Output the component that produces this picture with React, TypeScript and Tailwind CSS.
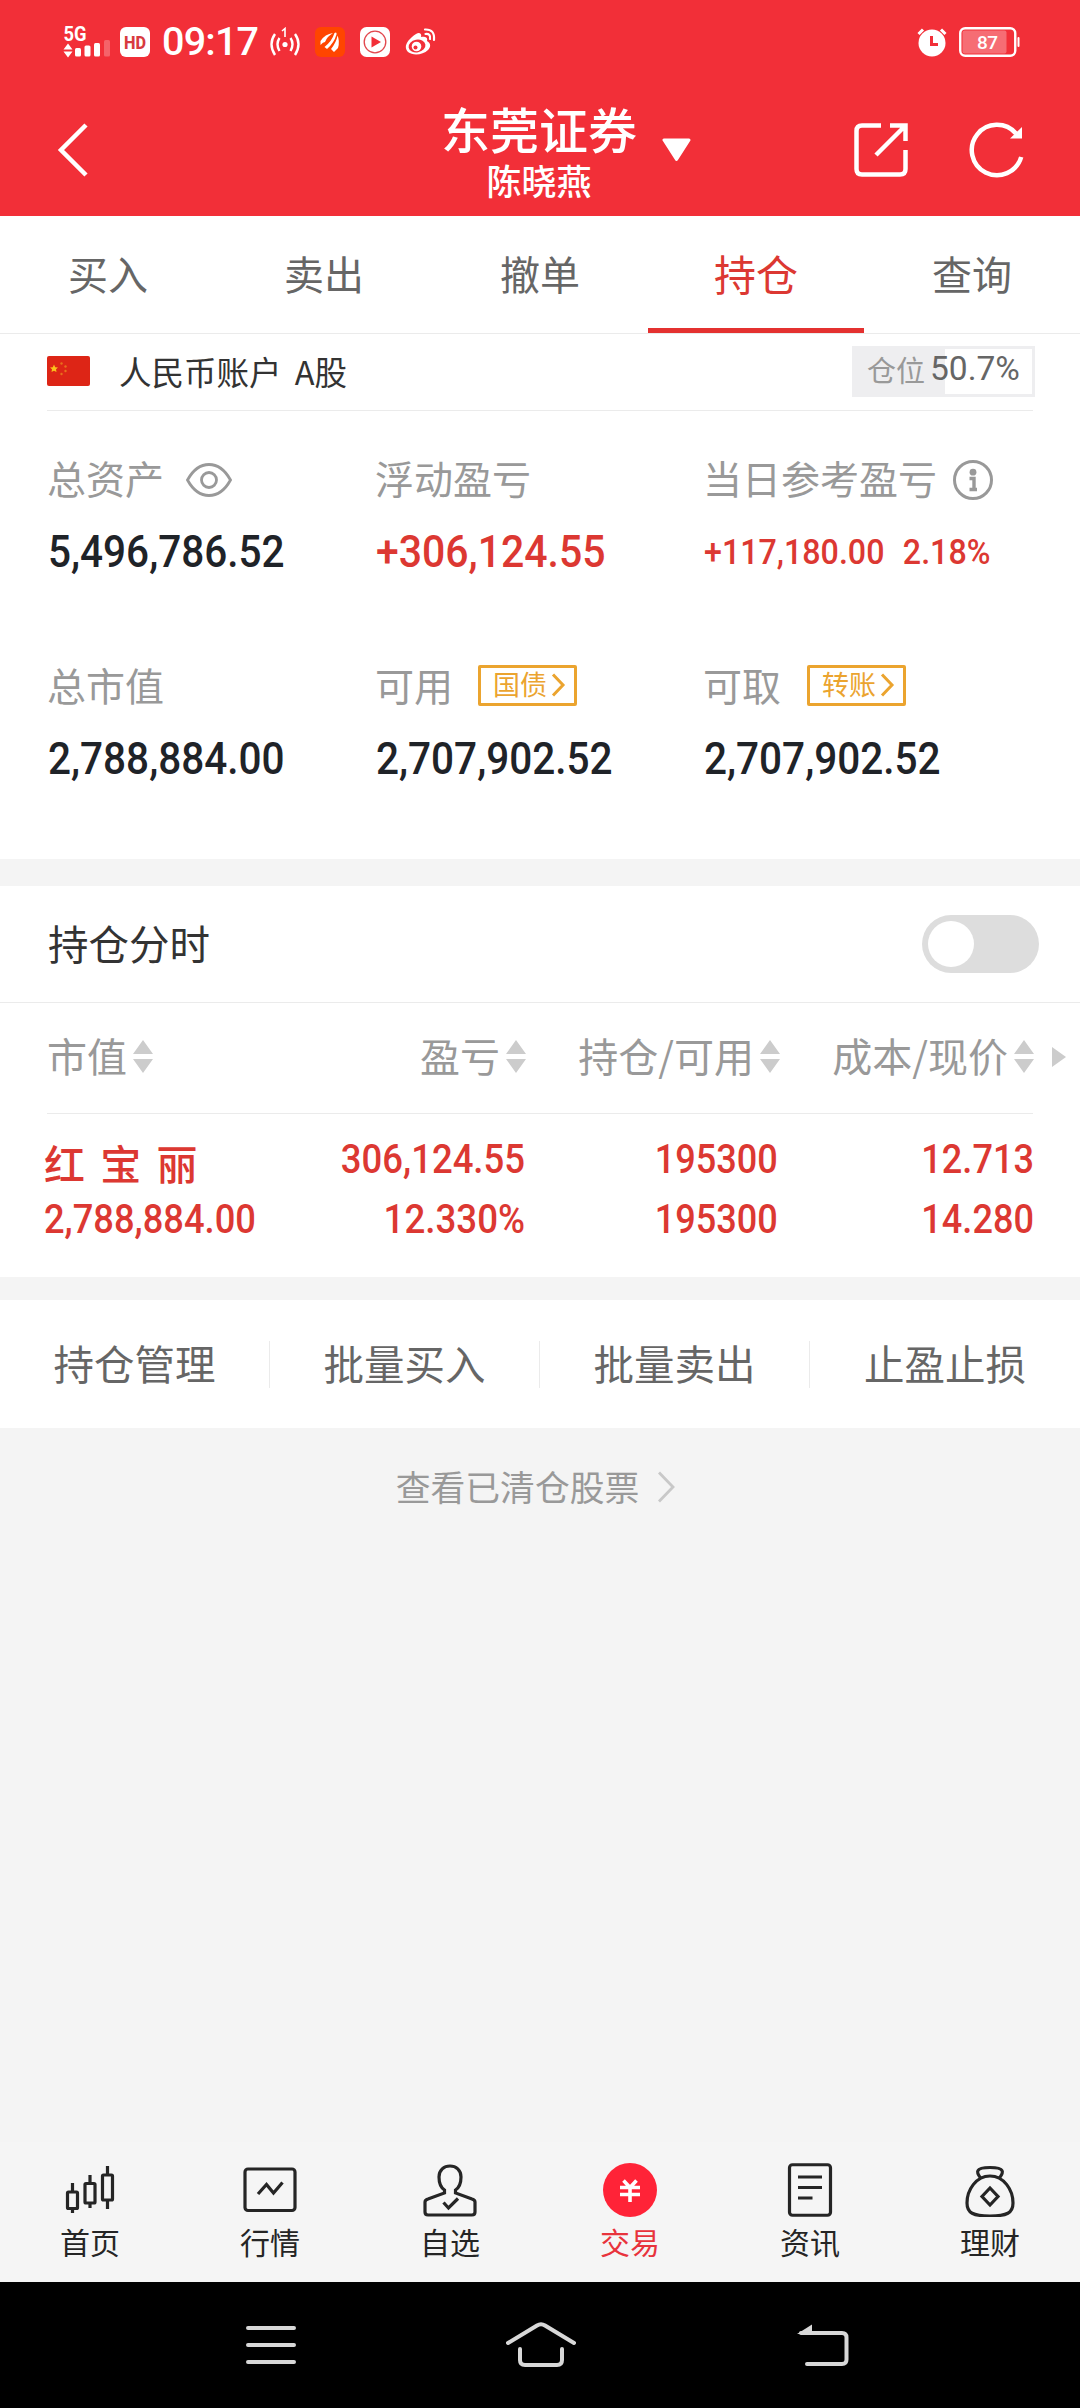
import type { ReactNode } from "react";
import clsx from "clsx";

const tabs = ["买入", "卖出", "撤单", "持仓", "查询"];

const actions = ["持仓管理", "批量买入", "批量卖出", "止盈止损"];

const BackIcon = () => (
  <svg width="32" height="56" viewBox="0 0 32 56" fill="none">
    <path d="M29 3 4 28 29 53" stroke="#fff" strokeWidth="4.5" />
  </svg>
);

const ShareIcon = () => (
  <svg width="54" height="54" viewBox="0 0 54 54" fill="none" stroke="#fff" strokeWidth="4.5">
    <path d="M27 2.5H8Q2.5 2.5 2.5 8V46Q2.5 51.5 8 51.5H46Q51.5 51.5 51.5 46V27" />
    <path d="M36 2.5H51.5V18M51 3 22 32" />
  </svg>
);

const RefreshIcon = () => (
  <svg width="56" height="56" viewBox="0 0 56 56" fill="none">
    <path d="M47 11.500A25.200 25.200 0 1 0 52.200 35" stroke="#fff" strokeWidth="4.5" />
    <path d="M53 5V16.500H41Z" fill="#fff" />
  </svg>
);

const SignalIcon = () => (
  <svg width="50" height="36" viewBox="0 0 50 36" fill="#fff">
    <text x="0.5" y="16.5" fontSize="20" fontWeight="700" fontFamily="Roboto" textLength="23" lengthAdjust="spacingAndGlyphs">
      5G
    </text>
    <path d="M0.5 25.500 5 19.500 9.500 25.500ZM0.5 27.500H9.500L5 33.500Z" />
    <rect x="12" y="24" width="6" height="8.500" rx="1.5" />
    <rect x="21.500" y="21.500" width="6" height="11" rx="1.5" />
    <rect x="31" y="19" width="6" height="13.500" rx="1.5" />
    <rect x="41" y="16" width="6" height="16.500" rx="1.5" opacity="0.25" />
  </svg>
);

const HotspotIcon = () => (
  <svg width="30" height="30" viewBox="0 0 30 30" fill="none" stroke="#fff" strokeWidth="2.4">
    <path d="M5 7Q-2 17 5 28M25 7Q32 17 25 28M9.500 11Q5.500 17 9.500 24M20.500 11Q24.500 17 20.500 24" />
    <path d="M12 4 15 1.500V10" strokeWidth="1.6" />
    <circle cx="15" cy="17.500" r="2.6" fill="#fff" stroke="none" />
  </svg>
);

const FanAppIcon = () => (
  <svg width="30" height="30" viewBox="0 0 30 30">
    <rect width="30" height="30" rx="6" fill="#ff4500" />
    <path d="M5.500 14Q10 7 18 6 12 9.500 10 15 8 15 5.500 18Z" fill="#fff" />
    <path d="M9.500 20Q17 14 19.500 6 22 4.500 21.500 7.500 19 16 12 22Z" fill="#fff" />
    <path d="M16 22Q21.500 15 22.500 8.500 25 14 23 21L19 25Z" fill="#fff" />
  </svg>
);

const VideoAppIcon = () => (
  <svg width="30" height="30" viewBox="0 0 30 30">
    <rect width="30" height="30" rx="6.5" fill="#fff" />
    <circle cx="15" cy="15" r="10.8" fill="none" stroke="#e2474d" strokeWidth="1.3" />
    <path d="M11.500 9.500 21 15 11.500 20.500Z" fill="#f22f38" />
  </svg>
);

const WeiboIcon = () => (
  <svg width="31" height="30" viewBox="0 0 31 30">
    <path
      d="M11 7C14 5 17 6 16 10 20 9 23 10 22 14 26 16 26 20 23 23 18 28 8 29 3 25-2 20 2 13 11 7Z"
      fill="#fff"
    />
    <ellipse cx="12" cy="19" rx="8.5" ry="6.3" fill="#f22f38" transform="rotate(-10 12 19)" />
    <circle cx="11.5" cy="19.5" r="4.8" fill="#fff" />
    <circle cx="10.500" cy="20.500" r="2" fill="#f22f38" />
    <path
      d="M20 2.500Q30 2 29 13M20.500 7Q26 6.500 25 12"
      fill="none"
      stroke="#fff"
      strokeWidth="2.2"
      strokeLinecap="round"
    />
  </svg>
);

const AlarmIcon = () => (
  <svg width="30" height="30" viewBox="0 0 30 30" fill="none">
    <circle cx="15" cy="16" r="13.5" fill="#fff" />
    <path d="M1.500 7 6 2.500M28.500 7 24 2.500" stroke="#fff" strokeWidth="3" />
    <path d="M14.500 9V17.500H21" stroke="#f22f38" strokeWidth="3" />
  </svg>
);

const BatteryIcon = () => (
  <svg width="61" height="30" viewBox="0 0 61 30">
    <rect x="1.25" y="1.25" width="55" height="27.5" rx="5" fill="none" stroke="#fff" strokeWidth="2.4" />
    <rect x="3.5" y="3.5" width="44" height="23" rx="2" fill="#fff" opacity="0.3" />
    <rect x="58.5" y="10" width="2" height="10" rx="1" fill="#fff" />
    <text x="28.5" y="21.5" textAnchor="middle" fontSize="19" fontWeight="500" fontFamily="Roboto" fill="#fff" textLength="21">
      87
    </text>
  </svg>
);

const FlagIcon = () => (
  <svg width="43" height="30" viewBox="0 0 43 30">
    <rect width="43" height="30" rx="2" fill="#dd2516" />
    <path d="M7 8.500 8.200 11.200 11 11.500 9 13.300 9.500 16 7 14.700 4.500 16 5 13.300 3 11.500 5.800 11.200Z" fill="#fbc21c" />
    <g fill="#e8701c">
      <circle cx="14.5" cy="7.5" r="1.2" />
      <circle cx="18.5" cy="10.5" r="1.2" />
      <circle cx="18.5" cy="15" r="1.2" />
      <circle cx="14.5" cy="18" r="1.2" />
    </g>
  </svg>
);

const EyeIcon = () => (
  <svg width="46" height="34" viewBox="0 0 46 34" fill="none" stroke="#999" strokeWidth="2.8">
    <path d="M1.500 17C7 7 14 1.500 23 1.500S39 7 44.500 17C39 27 32 32.500 23 32.500S7 27 1.500 17Z" />
    <circle cx="23" cy="17" r="7.5" />
  </svg>
);

const InfoIcon = () => (
  <svg width="40" height="40" viewBox="0 0 40 40" fill="none">
    <circle cx="20" cy="20" r="18.5" stroke="#999" strokeWidth="3" />
    <circle cx="20" cy="12.2" r="3.4" fill="#999" />
    <path d="M16.500 18.500H21V30M16.500 29.500H24" stroke="#999" strokeWidth="3.4" />
  </svg>
);

const SortIcon = () => (
  <svg width="20" height="34" viewBox="0 0 20 34" fill="#ccc">
    <path d="M0 14 10 0 20 14ZM0 19H20L10 33Z" />
  </svg>
);

interface NumProps {
  className?: string;
  children: ReactNode;
}

function Num({ className, children }: NumProps) {
  return (
    <span className={clsx("inline-block whitespace-nowrap leading-none font-medium font-[Roboto,sans-serif]", className)}>
      {children}
    </span>
  );
}

function LinkBadge({ text }: { text: string }) {
  return (
    <button className="flex items-center justify-center gap-1 w-[99px] h-[41px] -mt-1 pl-1 border-[3px] border-[#eba42f] rounded-xs text-[27px] leading-none text-[#eba42f]">
      <span className="-mt-1">{text}</span>
      <svg width="15" height="24" viewBox="0 0 15 24" fill="none">
        <path d="M2 1.500 12 12 2 22.500" stroke="#eba42f" strokeWidth="3" />
      </svg>
    </button>
  );
}

interface StatProps {
  label: string;
  extra?: ReactNode;
  children: ReactNode;
}

function Stat({ label, extra, children }: StatProps) {
  return (
    <div className="flex flex-col w-[328px]">
      <div className="flex items-center h-[44px] text-[39px] leading-none text-[#999]">
        <span className="-mt-1.5 whitespace-nowrap">{label}</span>
        {extra}
      </div>
      <div className="flex items-center h-[50px] mt-6">{children}</div>
    </div>
  );
}

function SortLabel({ text, className }: { text: string; className: string }) {
  return (
    <div className={clsx("flex items-center gap-1.5", className)}>
      <span className="-mt-1">{text}</span>
      <SortIcon />
    </div>
  );
}

const bottomTabs = [
  {
    name: "首页",
    icon: (
      <>
        <rect x="4.5" y="29" width="10" height="16.5" rx="1" />
        <rect x="22" y="20.5" width="10" height="19.5" rx="1" />
        <rect x="39.5" y="12" width="10" height="25" rx="1" />
        <path d="M9.500 20V29M9.500 45V50M27 12V21M27 40V45M44.500 3V12M44.500 37V46" />
      </>
    ),
  },
  {
    name: "行情",
    icon: (
      <>
        <rect x="2" y="6" width="50" height="41.5" rx="3" />
        <path d="M15 31 23.500 21.500 30.500 30 39.500 19.500" />
      </>
    ),
  },
  {
    name: "自选",
    icon: (
      <>
        <path d="M21.500 30V27C17 24 16 19 16 14 16 7 21 3 27 3S38 7 38 14C38 19 37 24 32.500 27V30L49 36Q52 37 52 39V49Q52 52 49 52H5Q2 52 2 49V39Q2 37 5 36Z" />
        <path d="M20.500 39.500 25.500 45 35 35.500" />
      </>
    ),
  },
  { name: "交易", icon: null },
  {
    name: "资讯",
    icon: (
      <>
        <rect x="6.5" y="1.75" width="41" height="50.5" rx="3" />
        <path d="M15 14H39M15 24.500H39M15 35H29.500" />
      </>
    ),
  },
  {
    name: "理财",
    icon: (
      <>
        <path d="M18 15.500C16 13 13.500 10 15 7.500 17 3.500 37 3.500 39 7.500 40.500 10 38 13 36 15.500" />
        <path d="M27 13C13 13 4 27 4 40 4 50 10 53 27 53S50 50 50 40C50 27 41 13 27 13Z" />
        <path d="M27 25 35 33.500 27 42 19 33.500Z" />
      </>
    ),
  },
];

function StatusBar() {
  return (
    <div className="flex items-center h-[84px] pl-[63px] pr-[60px]">
      <SignalIcon />
      <svg className="ml-[7px]" width="30" height="30" viewBox="0 0 30 30">
        <rect width="30" height="30" rx="6" fill="#fff" />
        <text x="15" y="21.5" textAnchor="middle" fontSize="18" fontWeight="800" fontFamily="Roboto" fill="#d83a40" textLength="22" lengthAdjust="spacingAndGlyphs">
          HD
        </text>
      </svg>
      <span className="w-[95px] ml-3 text-[39.5px] leading-none tracking-[-0.8px] text-white font-medium font-[Roboto,sans-serif]">
        09:17
      </span>
      <div className="flex items-center gap-[15px] ml-[13px]">
        <HotspotIcon />
        <FanAppIcon />
        <VideoAppIcon />
        <WeiboIcon />
      </div>
      <div className="flex items-center gap-3 ml-auto">
        <AlarmIcon />
        <BatteryIcon />
      </div>
    </div>
  );
}

function Header() {
  return (
    <header className="h-[216px] bg-[#f22f38] text-white">
      <StatusBar />
      <div className="flex items-center h-[132px] pl-[57px] pr-[55px]">
        <div className="w-[353px]">
          <BackIcon />
        </div>
        <div className="flex flex-col items-center w-[258px] leading-none whitespace-nowrap">
          <h1 className="text-[49px] font-medium">东莞证券</h1>
          <p className="mt-2.5 text-[35px] font-medium">陈晓燕</p>
        </div>
        <svg className="-ml-1.5" width="29" height="24" viewBox="0 0 29 24">
          <path d="M2 2H27L14.500 21.500Z" fill="#fff" stroke="#fff" strokeWidth="3" strokeLinejoin="round" />
        </svg>
        <div className="flex items-center gap-[61px] ml-auto">
          <ShareIcon />
          <RefreshIcon />
        </div>
      </div>
    </header>
  );
}

export default function App() {
  return (
    <div className="flex flex-col w-[1080px] h-[2408px] overflow-hidden bg-[#f4f4f4] font-[Noto_Sans_CJK_SC,sans-serif]">
      <Header />

      <nav className="flex h-[118px] bg-white border-b border-[#ebebeb]">
        {tabs.map((tab) => (
          <button
            key={tab}
            className={clsx(
              "flex-1 flex items-center justify-center pt-0.5 leading-none border-b-[5px]",
              tab === "持仓"
                ? "text-[42px] text-[#dc3832] border-[#e43130]"
                : "text-[40px] text-[#666] border-transparent"
            )}
          >
            {tab}
          </button>
        ))}
      </nav>

      <section className="h-[525px] px-[47px] bg-white">
        <div className="flex items-center h-[77px] pb-0.5 border-b border-[#ebebeb]">
          <FlagIcon />
          <span className="ml-[29px] text-[32.5px] leading-none text-[#333] [word-spacing:6px]">人民币账户 A股</span>
          <div className="relative flex items-center w-[183px] h-[51px] ml-auto -mr-0.5 pb-1 pl-3 border-[3px] border-[#eeeef0] leading-none whitespace-nowrap">
            <div className="absolute left-0 top-0 h-full w-[50.7%] bg-[#eeeef0]" />
            <span className="relative text-[29px] text-[#999]">仓位</span>
            <span className="relative ml-[5px] text-[33.5px] text-[#666] font-[Roboto,sans-serif]">50.7%</span>
          </div>
        </div>

        <div className="flex pt-[47px]">
          <Stat label="总资产" extra={<span className="ml-[22px]"><EyeIcon /></span>}>
            <Num className="ml-px text-[45px] text-[#1f2328] origin-left scale-x-[0.9]">5,496,786.52</Num>
          </Stat>
          <Stat label="浮动盈亏">
            <Num className="ml-px text-[45px] text-[#dc3832] origin-left scale-x-[0.91]">+306,124.55</Num>
          </Stat>
          <Stat label="当日参考盈亏" extra={<span className="ml-4"><InfoIcon /></span>}>
            <Num className="ml-px mt-0.5 text-[35px] text-[#dc3832] origin-left scale-x-[0.92]">
              +117,180.00<span className="ml-5">2.18%</span>
            </Num>
          </Stat>
        </div>
        <div className="flex pt-[89px]">
          <Stat label="总市值">
            <Num className="ml-px text-[45px] text-[#1f2328] origin-left scale-x-[0.9]">2,788,884.00</Num>
          </Stat>
          <Stat label="可用" extra={<span className="ml-[25px]"><LinkBadge text="国债" /></span>}>
            <Num className="ml-px text-[45px] text-[#1f2328] origin-left scale-x-[0.9]">2,707,902.52</Num>
          </Stat>
          <Stat label="可取" extra={<span className="ml-[26px]"><LinkBadge text="转账" /></span>}>
            <Num className="ml-px text-[45px] text-[#1f2328] origin-left scale-x-[0.9]">2,707,902.52</Num>
          </Stat>
        </div>
      </section>

      <section className="h-[391px] mt-[27px] bg-white">
        <div className="flex items-center justify-between h-[117px] pl-12 pr-[41px] border-b border-[#ebebeb]">
          <span className="-mt-px text-[40.5px] leading-none text-[#333]">持仓分时</span>
          <button className="flex items-center w-[117px] h-[58px] pl-1.5 rounded-full bg-[#ddd]">
            <span className="size-[46px] rounded-full bg-white" />
          </button>
        </div>

        <div className="flex items-center h-[110px] pb-0.5 pl-[47px] text-[40px] leading-none text-[#999] whitespace-nowrap">
          <SortLabel text="市值" className="w-[259px]" />
          <SortLabel text="盈亏" className="w-[220px] justify-end" />
          <SortLabel text="持仓/可用" className="w-[254px] justify-end" />
          <SortLabel text="成本/现价" className="w-[254px] justify-end" />
          <svg className="ml-[18px]" width="14" height="20" viewBox="0 0 14 20">
            <path d="M0 0 14 10 0 20Z" fill="#ccc" />
          </svg>
        </div>

        <div className="mx-[47px] border-t border-[#ebebeb]" />

        <div className="flex pt-[23px] pl-11 text-[#dc3832]">
          <div className="flex flex-col w-[262px]">
            <div className="flex items-center h-[50px] text-[41px] leading-none font-medium whitespace-pre [word-spacing:6px]">红 宝 丽</div>
            <Num className="mt-3 text-[41px] origin-left scale-x-[0.885]">2,788,884.00</Num>
          </div>
          <div className="flex flex-col items-end w-[219px] pt-0.5 gap-[19px]">
            <Num className="text-[41px] origin-right scale-x-[0.89]">306,124.55</Num>
            <Num className="text-[41px] origin-right scale-x-[0.895]">12.330%</Num>
          </div>
          <div className="flex flex-col items-end w-[253px] pt-0.5 gap-[19px]">
            <Num className="text-[41px] origin-right scale-x-[0.88]">195300</Num>
            <Num className="text-[41px] origin-right scale-x-[0.88]">195300</Num>
          </div>
          <div className="flex flex-col items-end w-[256px] pt-0.5 gap-[19px]">
            <Num className="text-[41px] origin-right scale-x-[0.88]">12.713</Num>
            <Num className="text-[41px] origin-right scale-x-[0.88]">14.280</Num>
          </div>
        </div>
      </section>

      <section className="flex items-center h-[128px] mt-[23px] bg-white">
        {actions.map((action, i) => (
          <button
            key={action}
            className={clsx(
              "flex items-center justify-center w-[270px] h-[47px] pb-0.5 text-[40.5px] leading-none text-[#666]",
              i < actions.length - 1 && "border-r border-[#ebebeb]"
            )}
          >
            {action}
          </button>
        ))}
      </section>

      <button className="flex items-center justify-center gap-[18px] h-[118px] pr-[9px] text-[34.8px] leading-none text-[#999]">
        <span className="-mt-0.5">查看已清仓股票</span>
        <svg width="18" height="32" viewBox="0 0 18 32" fill="none">
          <path d="M2 1.500 16 16 2 30.500" stroke="#c8c8c8" strokeWidth="2.8" />
        </svg>
      </button>

      <footer className="flex h-[140px] mt-auto pt-[21px] bg-[#f5f5f5]">
        {bottomTabs.map(({ name, icon }) => (
          <div
            key={name}
            className={clsx("flex flex-col items-center w-[180px]", icon ? "text-[#252525]" : "text-[#e8333c]")}
          >
            {icon ? (
              <svg width="54" height="54" viewBox="0 0 54 54" fill="none" stroke="currentColor" strokeWidth="3.2">
                {icon}
              </svg>
            ) : (
              <svg width="54" height="54" viewBox="0 0 54 54" fill="none">
                <circle cx="27" cy="27" r="27" fill="#ff2337" />
                <path d="M20.500 17.500 27 24.500 33.500 17.500M17 24.500H37M17 31.500H37M27 24.500V39" stroke="#fff" strokeWidth="3.6" />
              </svg>
            )}
            <span className="mt-[9px] text-[30px] leading-none">{name}</span>
          </div>
        ))}
      </footer>

      <div className="flex items-center h-[126px] pl-[246px] bg-black">
        <svg width="50" height="40" viewBox="0 0 50 40" stroke="#d8d8d8" strokeWidth="4" strokeLinecap="round">
          <path d="M2 3H48M2 20H48M2 37H48" />
        </svg>
        <svg className="ml-[210px]" width="70" height="46" viewBox="0 0 70 46" fill="none" stroke="#d8d8d8" strokeWidth="4" strokeLinecap="round">
          <path d="M2 21 31 3.500Q35 1 39 3.500L68 21" />
          <path d="M14 27V38Q14 43 19 43H51Q56 43 56 38V27" />
        </svg>
        <svg className="ml-[221px]" width="52" height="44" viewBox="0 0 52 44" fill="none">
          <path d="M4 10H45Q49.500 10 49.500 14.500V36.500Q49.500 41 45 41H10" stroke="#d8d8d8" strokeWidth="4" strokeLinecap="round" />
          <path d="M0 11 15 1.500V11Z" fill="#d8d8d8" />
        </svg>
      </div>
    </div>
  );
}
